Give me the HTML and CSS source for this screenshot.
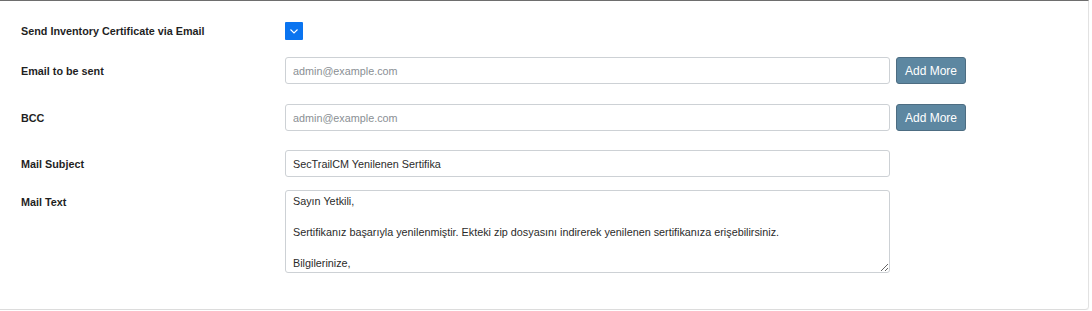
FILE: index.html
```html
<!DOCTYPE html>
<html>
<head>
<meta charset="utf-8">
<link rel="stylesheet" href="styles.css">
</head>
<body>
<div class="card">
  <div class="row row-check">
    <div class="label">Send Inventory Certificate via Email</div>
    <div class="field">
      <span class="checkbox"><svg width="18" height="18" viewBox="0 0 18 18"><polyline points="5.5,7.5 9,11 12.5,7.5" fill="none" stroke="#fff" stroke-width="1.1"/></svg></span>
    </div>
  </div>
  <div class="row row-email">
    <div class="label">Email to be sent</div>
    <div class="field">
      <input class="input" type="text" placeholder="admin@example.com">
      <button class="btn">Add More</button>
    </div>
  </div>
  <div class="row row-bcc">
    <div class="label">BCC</div>
    <div class="field">
      <input class="input" type="text" placeholder="admin@example.com">
      <button class="btn">Add More</button>
    </div>
  </div>
  <div class="row row-subject">
    <div class="label">Mail Subject</div>
    <div class="field">
      <input class="input" type="text" value="SecTrailCM Yenilenen Sertifika">
    </div>
  </div>
  <div class="row row-text">
    <div class="label label-top">Mail Text</div>
    <div class="field">
      <textarea class="textarea">Sayın Yetkili,

Sertifikanız başarıyla yenilenmiştir. Ekteki zip dosyasını indirerek yenilenen sertifikanıza erişebilirsiniz.

Bilgilerinize,</textarea>
    </div>
  </div>
</div>
</body>
</html>
```

FILE: styles.css
```css
html, body {
  margin: 0;
  padding: 0;
  background: #ffffff;
}
body {
  font-family: "Liberation Sans", Arial, sans-serif;
  font-size: 11px;
  color: #212529;
}
.card {
  width: 1089px;
  height: 310px;
  box-sizing: border-box;
  border-top: 1px solid #6e6e6e;
  border-right: 1px solid #e2e2e2;
  border-bottom: 1px solid #dcdcdc;
  border-bottom-right-radius: 4px;
  box-shadow: 0 1px 1px rgba(0,0,0,0.05);
  padding: 21px 0 0 21px;
  display: flex;
  flex-direction: column;
}
.row {
  display: flex;
  align-items: center;
}
.label {
  width: 264px;
  flex: none;
  font-weight: bold;
  font-size: 10.8px;
  color: #1f1f1f;
}
.label-top {
  align-self: flex-start;
  line-height: 24px;
}
.field {
  display: flex;
  align-items: center;
  gap: 6px;
}
.row-check { height: 18px; }
.row-email { margin-top: 17px; }
.row-bcc { margin-top: 20px; }
.row-subject { margin-top: 19px; }
.row-text { margin-top: 13px; }
.checkbox {
  width: 18px;
  height: 18px;
  background: #0a74f0;
  border-radius: 1px;
  display: block;
}
.checkbox svg { display: block; }
.input {
  width: 605px;
  height: 27px;
  box-sizing: border-box;
  border: 1px solid #cdd1d5;
  border-radius: 3px;
  padding: 0 7px;
  font-family: "Liberation Sans", Arial, sans-serif;
  font-size: 10.8px;
  color: #2b2b2b;
  background: #fff;
  outline: none;
}
.input::placeholder { color: #8a8f94; }
.btn {
  width: 70px;
  height: 27px;
  box-sizing: border-box;
  background: #5d87a1;
  border: 1px solid #4d6d82;
  border-radius: 3px;
  color: #ffffff;
  font-family: "Liberation Sans", Arial, sans-serif;
  font-size: 12px;
  padding: 0;
}
.textarea {
  width: 605px;
  height: 83px;
  box-sizing: border-box;
  border: 1px solid #cdd1d5;
  border-radius: 3px;
  padding: 3px 7px;
  font-family: "Liberation Sans", Arial, sans-serif;
  font-size: 10.8px;
  line-height: 15.5px;
  color: #2b2b2b;
  resize: both;
  overflow: hidden;
  display: block;
  outline: none;
}
```
